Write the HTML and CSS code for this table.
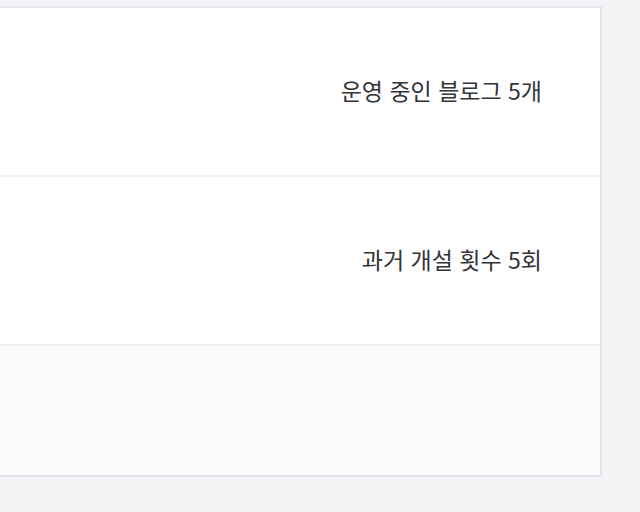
FILE: index.html
```html
<!DOCTYPE html>
<html lang="ko">
<head>
<meta charset="utf-8">
<link rel="stylesheet" href="styles.css">
</head>
<body>
<div class="card">
  <div class="row"><span class="label">운영 중인 블로그 5개</span></div>
  <div class="row"><span class="label">과거 개설 횟수 5회</span></div>
  <div class="row row-muted"></div>
</div>
</body>
</html>
```
FILE: styles.css
```css
html, body {
  margin: 0;
  padding: 0;
}
body {
  background: #f3f4f6;
  width: 640px;
  height: 512px;
  overflow: hidden;
  padding-top: 6px;
  box-sizing: border-box;
  font-family: "Noto Sans CJK KR", "Noto Sans", sans-serif;
}
.card {
  margin-left: -20px;
  width: 622px;
  background: #ffffff;
  border: 2px solid #e4e6eb;
  box-sizing: border-box;
  display: flex;
  flex-direction: column;
}
.row {
  height: 169px;
  display: flex;
  align-items: center;
  justify-content: flex-end;
  padding-right: 58px;
  padding-bottom: 4px;
  border-bottom: 2px solid #f1f1f3;
  box-sizing: border-box;
}
.row-muted {
  height: 129px;
  border-bottom: none;
  background: #fafbfc;
}
.label {
  font-size: 23px;
  color: #333338;
}
```
